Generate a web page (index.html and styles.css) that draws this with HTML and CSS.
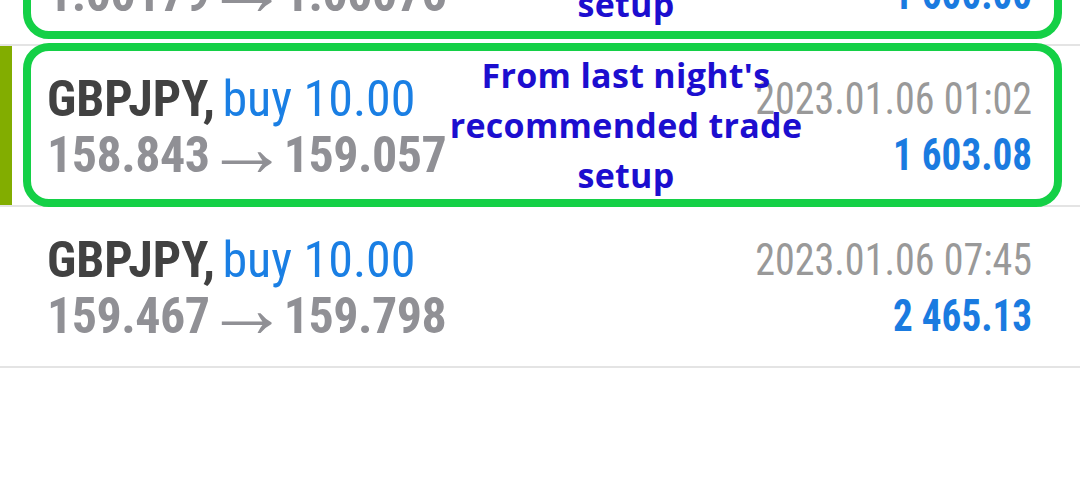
FILE: index.html
```html
<!DOCTYPE html>
<html>
<head>
<meta charset="utf-8">
<link rel="stylesheet" href="styles.css">
</head>
<body>
<div class="list">
  <div class="row row-top">
    <div class="info">
      <div class="line1"><span class="sym">GBPJPY,</span> <span class="type">buy 10.00</span></div>
      <div class="line2">1.00179<span class="arrow">→</span>1.00076</div>
    </div>
    <div class="meta">
      <div class="date">2023.01.06 00:15</div>
      <div class="profit">1 600.00</div>
    </div>
    <div class="mark mark-top"></div>
    <div class="note note-top">From last night's<br>recommended trade<br>setup</div>
  </div>
  <div class="row selected">
    <div class="bar"></div>
    <div class="info">
      <div class="line1"><span class="sym">GBPJPY,</span> <span class="type">buy 10.00</span></div>
      <div class="line2">158.843<span class="arrow">→</span>159.057</div>
    </div>
    <div class="meta">
      <div class="date">2023.01.06 01:02</div>
      <div class="profit">1 603.08</div>
    </div>
    <div class="mark"></div>
    <div class="note">From last night's<br>recommended trade<br>setup</div>
  </div>
  <div class="row">
    <div class="info">
      <div class="line1"><span class="sym">GBPJPY,</span> <span class="type">buy 10.00</span></div>
      <div class="line2">159.467<span class="arrow">→</span>159.798</div>
    </div>
    <div class="meta">
      <div class="date">2023.01.06 07:45</div>
      <div class="profit">2 465.13</div>
    </div>
  </div>
</div>
</body>
</html>
```
FILE: styles.css
```css
html, body {
  margin: 0;
  padding: 0;
  background: #ffffff;
  width: 1080px;
  height: 480px;
  overflow: hidden;
}
.list {
  display: flex;
  flex-direction: column;
  margin-top: -115px;
}
.row {
  position: relative;
  border-bottom: 2px solid #e4e4e4;
  display: flex;
  justify-content: space-between;
  align-items: flex-start;
  padding: 25px 48px 0 47px;
  box-sizing: border-box;
  height: 161px;
  font-family: "Roboto Condensed", Roboto, sans-serif;
}
.bar {
  position: absolute;
  left: 0;
  top: 0;
  bottom: 0;
  width: 12px;
  background: #82ad00;
}
.info, .meta {
  line-height: 56px;
  white-space: nowrap;
}
.meta {
  text-align: right;
  transform: scaleX(0.89);
  transform-origin: right center;
}
.line1 { font-size: 50px; }
.sym { font-weight: 700; color: #414141; }
.type { color: #1a7fe4; margin-left: -4px; }
.line2 { font-size: 50px; font-weight: 700; color: #909095; letter-spacing: -0.5px; }
.arrow {
  font-size: 84px;
  font-weight: 300;
  line-height: 0;
  letter-spacing: 0;
  margin: 0 -5px 0 -5px;
  vertical-align: -4px;
}
.date { font-size: 45px; color: #999999; font-weight: 400; }
.profit { font-size: 44px; font-weight: 700; color: #1a7be0; }
.mark {
  position: absolute;
  left: 23px;
  width: 1039px;
  top: -3px;
  height: 164px;
  box-sizing: border-box;
  border: 8px solid #14d046;
  border-radius: 26px;
  pointer-events: none;
}
.mark-top { top: -10px; }
.note {
  position: absolute;
  left: 376px;
  width: 500px;
  top: 4px;
  text-align: center;
  font-family: "Open Sans", "Noto Sans", sans-serif;
  font-weight: 700;
  font-size: 34px;
  letter-spacing: 0.3px;
  line-height: 50px;
  color: #1c0ecf;
}
.note-top { top: -6px; }
```
